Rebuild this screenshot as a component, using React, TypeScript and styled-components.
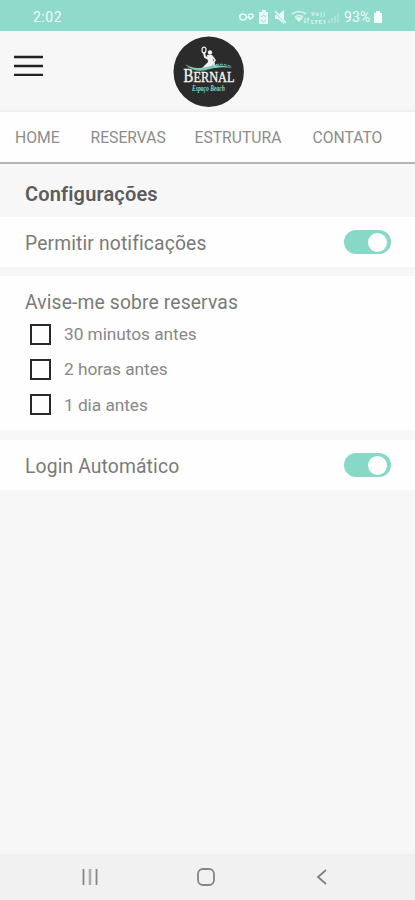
import React, { useState } from "react";
import styled, { createGlobalStyle } from "styled-components";

const GlobalStyle = createGlobalStyle`
  * { box-sizing: border-box; }
  body { margin: 0; background: #f7f7f7; font-family: Roboto, "Liberation Sans", sans-serif; }
  button { font: inherit; border: 0; padding: 0; background: none; display: flex; }
`;
const Screen = styled.div`
  width: 415px;
  height: 900px;
  display: flex;
  flex-direction: column;
  overflow: hidden;
  background: #f7f7f7;
`;
const StatusBar = styled.div`
  height: 31px;
  flex: none;
  display: flex;
  justify-content: space-between;
  align-items: center;
  padding: 2px 32px 0 33px;
  background: #90dacb;
  color: #eefbf8;
  font-size: 14px;
  line-height: 16px;
  letter-spacing: 0.5px;
`;
const StatusIcons = styled.div`
  display: flex;
  align-items: center;
  letter-spacing: 0.1px;
`;
const Percentage = styled.span`
  width: 29px;
`;
const Header = styled.header`
  height: 81px;
  flex: none;
  display: grid;
  grid-template-columns: 1fr 72px 1fr;
  padding: 5px 11px 0 14px;
  border-bottom: 2px solid #f0f0f0;
`;
const MenuButton = styled.button`
  width: 29px;
  height: 22px;
  margin-top: 19px;
`;
const Tabs = styled.nav`
  height: 52px;
  flex: none;
  display: flex;
  align-items: center;
  padding: 1px 0 0 15px;
  background: #fefefe;
  border-bottom: 2px solid #b1b6b3;
`;
const Tab = styled.a<{ $width: number }>`
  width: ${(p) => p.$width}px;
  flex: none;
  color: #8c8c8c;
  font-size: 15.7px;
  line-height: 18px;
  white-space: nowrap;
`;
const Title = styled.h1`
  height: 53px;
  flex: none;
  margin: 0;
  padding: 7px 25px 0;
  color: #5c5c5c;
  font-size: 20px;
  font-weight: 600;
  line-height: 46px;
  letter-spacing: 0.15px;
`;
const Panel = styled.section<{ $gap?: number }>`
  flex: none;
  margin-bottom: ${(p) => p.$gap ?? 0}px;
  background: #fefefe;
`;
const SettingRow = styled.div`
  height: 50px;
  display: flex;
  align-items: center;
  justify-content: space-between;
  padding: 0 24px 0 25px;
`;
const Label = styled.span`
  color: #7a7a7a;
  font-size: 19.3px;
  line-height: 24px;
  letter-spacing: 0.14px;
  padding-top: 3px;
`;
const Toggle = styled.button<{ $on: boolean }>`
  width: 47px;
  height: 24px;
  padding: 2.5px 4px 2px 3px;
  border-radius: 12px;
  justify-content: ${(p) => (p.$on ? "flex-end" : "flex-start")};
  background: ${(p) => (p.$on ? "#88d8c7" : "#cccccc")};
`;
const Knob = styled.span`
  width: 19px;
  height: 19px;
  border-radius: 50%;
  background: #fefefe;
`;
const Options = styled.div`
  height: 154px;
  display: flex;
  flex-direction: column;
  padding: 12px 25px 0;
`;
const Option = styled.label`
  display: flex;
  align-items: center;
  gap: 13px;
  height: 35.3px;
  padding-left: 5px;
  color: #888;
  font-size: 17.3px;
  letter-spacing: -0.04px;
`;
const Checkbox = styled.input`
  appearance: none;
  width: 21px;
  height: 21px;
  margin: 0;
  border: 2px solid #292929;
  background: #fefefe;
  &:checked { background: #88d8c7; }
`;
const OptionList = styled.div`
  margin-top: 1.5px;
`;
const NavigationBar = styled.footer`
  height: 46px;
  flex: none;
  margin-top: auto;
  display: flex;
  align-items: center;
  gap: 98px;
  padding-left: 81px;
  background: #f1f1f1;
`;

const StatusGlyphs = () => (
  <svg width="106" height="18" viewBox="0 0 106 18" fill="none" stroke="#e9faf6" strokeWidth="1.5">
    <ellipse cx="5" cy="9" rx="3.3" ry="3" />
    <path d="M8 9h4M10 7q4-2 5 0t-3 4l-2-2" />
    <path d="M24 2h4v2h2v12h-9V4h3z" fill="#e9faf6" stroke="none" />
    <path d="m23 9 2.5-2L28 9M23 12l2.5 2 2.5-2" stroke="#90dacb" strokeWidth="1" />
    <path d="M37 7h3l6-5v14l-6-5h-3z" fill="#e9faf6" stroke="none" />
    <path d="m36 3 12 12" stroke="#90dacb" strokeWidth="2" /><path d="m37 3 11 12" />
    <g opacity=".82">
      <path d="M54 6q7-5 14 0M57 9q4-3 8 0" strokeWidth="1.6" />
      <path d="m57 10 4 4 4-4q-4-2-8 0z" fill="#e9faf6" stroke="none" />
      <path d="M67 10v5m-1.5-1.5L67 15l1.5-1.5M70 15v-5m-1.5 1.5L70 10l1.5 1.5" strokeWidth="1" />
      <text x="73" y="8" fill="#e9faf6" stroke="none" fontSize="6" fontWeight="700" textLength="14">Vo))</text>
      <text x="73" y="15.5" fill="#e9faf6" stroke="none" fontSize="6" fontWeight="700" textLength="15">LTE1</text>
    </g>
    <path d="M91 15v-3M94 15v-5M97 15V8M100 15V5" opacity=".4" strokeWidth="1.5" />
  </svg>
);
const BatteryGlyph = () => (
  <svg width="10" height="14" viewBox="0 0 10 14" fill="#f2fcfa">
    <path d="M3 1h4v2h2v10H1V3h2z" />
  </svg>
);
const Logo = () => (
  <svg width="72" height="72" viewBox="0 0 72 72" role="img" aria-label="Bernal Espaço Beach">
    <circle cx="35.7" cy="35.7" r="35.2" fill="#2b2b2b" />
    <g stroke="#f1f1f1" fill="none" strokeLinecap="round">
      <ellipse cx="31" cy="14" rx="2" ry="2.9" strokeWidth="1.2" />
      <path d="m31 17 1 4 4 2" strokeWidth="2" />
      <path d="m39 20 3 4-2 4" strokeWidth="1.5" />
    </g>
    <circle cx="37" cy="16.5" r="2.2" fill="#f1f1f1" />
    <path d="m34 19 5 0 1.5 6 3.5 7H29l6-6z" fill="#f1f1f1" />
    <path d="M12 28q9 6 21 3 13-4 27 1-14-2-25 1.5-15 4-23-5.5z" fill="#7bcbbb" />
    <path d="M39 29.5q9-3 19 1" stroke="#7bcbbb" strokeWidth="1" fill="none" strokeDasharray="3 1" />
    <text x="10.5" y="46" fill="#f4f4f4" fontFamily="Liberation Serif" fontSize="15" textLength="51" lengthAdjust="spacingAndGlyphs" stroke="#f4f4f4" strokeWidth=".4">
      <tspan fontSize="18">B</tspan><tspan>ERNAL</tspan>
    </text>
    <text x="19" y="54.5" fill="#87d7c8" fontFamily="Liberation Serif" fontSize="8.5" fontStyle="italic" fontWeight="700" textLength="33" lengthAdjust="spacingAndGlyphs">Espaço Beach</text>
  </svg>
);

const tabs = [
  { name: "HOME", width: 75.5 },
  { name: "RESERVAS", width: 104 },
  { name: "ESTRUTURA", width: 118 },
  { name: "CONTATO", width: 80 },
];
const reminders = ["30 minutos antes", "2 horas antes", "1 dia antes"];

function Setting({ label }: { label: string }) {
  const [on, setOn] = useState(true);
  return (
    <SettingRow>
      <Label>{label}</Label>
      <Toggle $on={on} role="switch" aria-checked={on} aria-label={label} onClick={() => setOn(!on)}>
        <Knob />
      </Toggle>
    </SettingRow>
  );
}

export default function App() {
  return (
    <Screen>
      <GlobalStyle />
      <StatusBar>
        <span>2:02</span>
        <StatusIcons><StatusGlyphs /><Percentage>93%</Percentage><BatteryGlyph /></StatusIcons>
      </StatusBar>
      <Header>
        <MenuButton aria-label="Menu">
          <svg width="29" height="22" viewBox="0 0 29 22" stroke="#222" strokeWidth="2.3">
            <path d="M0 2h29M0 11h29M0 19.8h29" />
          </svg>
        </MenuButton>
        <Logo />
      </Header>
      <Tabs>{tabs.map((t) => <Tab key={t.name} $width={t.width}>{t.name}</Tab>)}</Tabs>
      <Title>Configurações</Title>
      <Panel $gap={9}><Setting label="Permitir notificações" /></Panel>
      <Panel $gap={10}>
        <Options>
          <Label>Avise-me sobre reservas</Label>
          <OptionList>
            {reminders.map((r) => <Option key={r}><Checkbox type="checkbox" />{r}</Option>)}
          </OptionList>
        </Options>
      </Panel>
      <Panel><Setting label="Login Automático" /></Panel>
      <NavigationBar>
        <svg width="18" height="18" viewBox="0 0 18 18" stroke="#858585" strokeWidth="1.8">
          <path d="M2.5 1v16M15.5 1v16" /><path d="M9 1v16" stroke="#aaa" strokeWidth="2.5" />
        </svg>
        <svg width="18" height="18" viewBox="0 0 18 18" fill="none" stroke="#858585" strokeWidth="1.8">
          <rect x="1" y="1" width="16" height="16" rx="5" />
        </svg>
        <svg width="18" height="18" viewBox="0 0 18 18" fill="none" stroke="#808080" strokeWidth="1.8">
          <path d="M13 2 5 9l8 7" />
        </svg>
      </NavigationBar>
    </Screen>
  );
}
